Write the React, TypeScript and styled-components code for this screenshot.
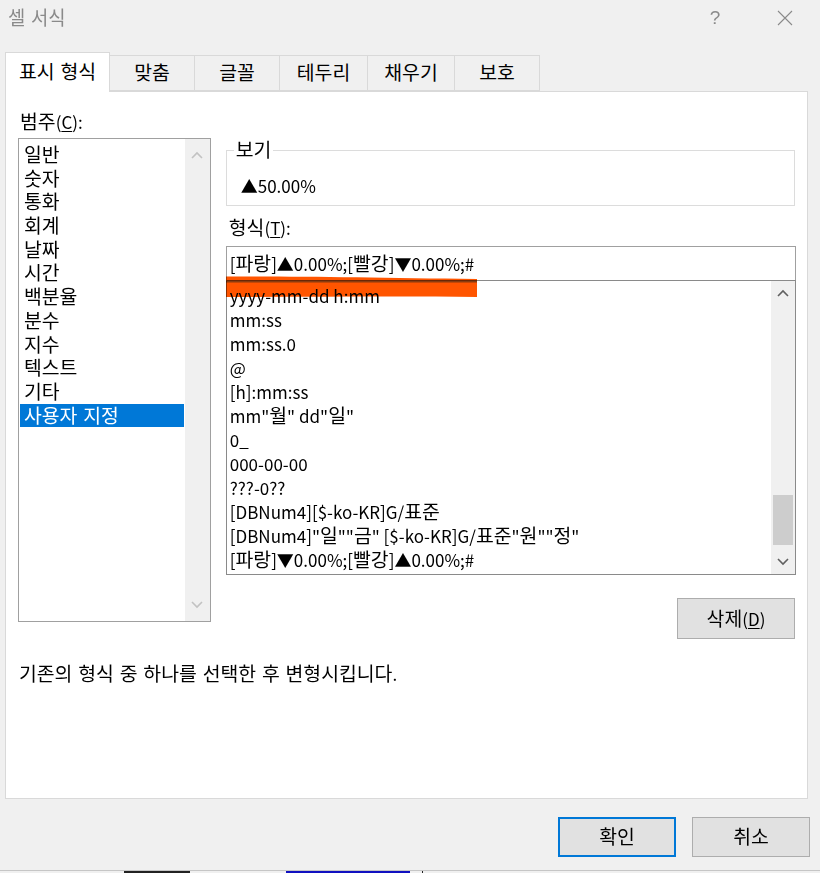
import React from 'react';
import styled, { createGlobalStyle } from 'styled-components';

const GlobalStyle = createGlobalStyle`
  html, body { margin: 0; padding: 0; background: #f0f0f0; }
  body { font-family: "Noto Sans CJK KR", "Noto Sans", sans-serif; color: #000; }
  * { box-sizing: border-box; }
`;

const Hangul = styled.span`
  display: inline-block;
  font-size: 1.14em;
  line-height: 1;
  word-spacing: 1.5px;
  white-space: pre;
`;

const HANGUL_RUN = /[\uAC00-\uD7A3\u3131-\u318E]+(?:\s+[\uAC00-\uD7A3\u3131-\u318E]+)*/g;

function K({ children }: { children: string }) {
  const parts: React.ReactNode[] = [];
  let last = 0;
  let m: RegExpExecArray | null;
  const re = new RegExp(HANGUL_RUN.source, 'g');
  let i = 0;
  while ((m = re.exec(children)) !== null) {
    if (m.index > last) parts.push(children.slice(last, m.index));
    parts.push(<Hangul key={i++}>{m[0]}</Hangul>);
    last = m.index + m[0].length;
  }
  if (last < children.length) parts.push(children.slice(last));
  return <>{parts}</>;
}

const Dialog = styled.div`
  width: 820px;
  height: 873px;
  display: flex;
  flex-direction: column;
  background: #f0f0f0;
  overflow: hidden;
`;

const TitleBar = styled.div`
  height: 36px;
  display: flex;
  align-items: center;
  padding-left: 8px;
`;

const Title = styled.div`
  flex: 1;
  font-size: 16.5px;
  color: #8a8a8a;
  line-height: 36px;
`;

const TitleButton = styled.div`
  width: 70px;
  height: 36px;
  display: flex;
  align-items: center;
  justify-content: center;
  color: #8a8a8a;
  font-family: "Liberation Sans", sans-serif;
  font-size: 19px;
`;

const TabStrip = styled.div`
  margin-top: 16px;
  height: 40px;
  padding-left: 5px;
  display: flex;
  align-items: flex-end;
  position: relative;
  z-index: 1;
`;

const Tab = styled.div<{ $active?: boolean; $w: number }>`
  width: ${(p) => p.$w}px;
  height: ${(p) => (p.$active ? 40 : 36)}px;
  margin-bottom: ${(p) => (p.$active ? 0 : 1)}px;
  margin-left: -1px;
  &:first-child { margin-left: 0; }
  border: 1px solid #d9d9d9;
  border-bottom: ${(p) => (p.$active ? 'none' : '1px solid #d9d9d9')};
  background: ${(p) => (p.$active ? '#fff' : '#f0f0f0')};
  display: flex;
  align-items: center;
  justify-content: center;
  padding-bottom: ${(p) => (p.$active ? 1 : 0)}px;
  font-size: 17px;
  line-height: 24px;
  color: #000;
`;

const Panel = styled.div`
  margin: -1px 12px 0 5px;
  height: 709px;
  background: #fff;
  border: 1px solid #d9d9d9;
  padding: 18px 11px 0 12px;
  display: flex;
  flex-direction: column;
`;

const Label = styled.div<{ $pl?: number; $mt?: number }>`
  font-size: 17px;
  line-height: 24px;
  height: 24px;
  margin-top: ${(p) => p.$mt ?? 0}px;
  padding-left: ${(p) => p.$pl ?? 2}px;
  u { text-underline-offset: 2px; }
`;

const Columns = styled.div`
  margin-top: 4px;
  display: flex;
  gap: 15px;
  align-items: flex-start;
`;

const CategoryBox = styled.div`
  width: 193px;
  height: 484px;
  border: 1px solid #a0a0a0;
  display: flex;
`;

const CategoryItems = styled.div`
  flex: 1;
  padding: 4px 1px 0 1px;
`;

const CategoryItem = styled.div<{ $selected?: boolean }>`
  height: 23.7px;
  line-height: 23.7px;
  font-size: 17px;
  padding-left: 4px;
  background: ${(p) => (p.$selected ? '#0078d7' : 'transparent')};
  color: ${(p) => (p.$selected ? '#fff' : '#000')};
  white-space: nowrap;
`;

const ScrollBar = styled.div<{ $w: number }>`
  width: ${(p) => p.$w}px;
  background: #f0f0f0;
  display: flex;
  flex-direction: column;
`;

const ArrowBox = styled.div<{ $h?: number }>`
  height: ${(p) => p.$h ?? 24}px;
  display: flex;
  align-items: center;
  justify-content: center;
`;

const Track = styled.div`
  flex: 1;
  display: flex;
  flex-direction: column;
  align-items: center;
`;

const Thumb = styled.div<{ $top: number; $h: number }>`
  margin-top: ${(p) => p.$top}px;
  height: ${(p) => p.$h}px;
  width: 20px;
  background: #cdcdcd;
`;

const RightColumn = styled.div`
  width: 571px;
  display: flex;
  flex-direction: column;
  position: relative;
`;

const GroupBox = styled.fieldset`
  margin: 0;
  width: 569px;
  min-width: 0;
  border: 1px solid #dcdcdc;
  padding: 12px 14px 7px 14px;
`;

const GroupLegend = styled.legend`
  font-size: 17px;
  line-height: 24px;
  height: 24px;
  padding: 0 2px;
  margin-left: -7px;
`;

const SampleText = styled.div`
  font-size: 17px;
  line-height: 24px;
`;

const FormatInput = styled.div`
  margin-top: 6px;
  height: 35px;
  border: 1px solid #a0a0a0;
  display: flex;
  align-items: center;
  padding-left: 3px;
  font-size: 17px;
  line-height: 24px;
  background: #fff;
  white-space: nowrap;
`;

const FormatList = styled.div`
  margin-top: -1px;
  height: 295px;
  border: 1px solid #8a8a8a;
  display: flex;
`;

const FormatItems = styled.div`
  flex: 1;
  padding: 3px 0 0 3px;
`;

const FormatItem = styled.div`
  height: 24px;
  line-height: 24px;
  font-size: 17px;
  white-space: nowrap;
`;

const Marker = styled.svg`
  position: absolute;
  left: 0;
  top: 138px;
  mix-blend-mode: multiply;
  pointer-events: none;
`;

const Button = styled.button<{ $default?: boolean }>`
  width: 118px;
  height: 40px;
  background: #e1e1e1;
  border: ${(p) => (p.$default ? '2px solid #0078d7' : '1px solid #adadad')};
  font-family: inherit;
  font-size: 17px;
  line-height: 24px;
  color: #000;
  padding: 0;
  display: flex;
  align-items: center;
  justify-content: center;
  u { text-underline-offset: 2px; }
`;

const DeleteButton = styled(Button)`
  align-self: flex-end;
  margin: 23px 1px 0 0;
  height: 41px;
`;

const Description = styled.div`
  margin-top: 23px;
  font-size: 17px;
  line-height: 24px;
  padding-left: 1px;
`;

const Footer = styled.div`
  margin-top: 18px;
  display: flex;
  justify-content: flex-end;
  gap: 16px;
  padding-right: 10px;
`;

const BottomStrip = styled.div`
  margin-top: 13px;
  height: 3px;
  border-top: 1px solid #c6c6c6;
  display: flex;
  align-items: flex-start;
`;

const Frag = styled.div<{ $ml: number; $w: number; $c: string }>`
  margin-left: ${(p) => p.$ml}px;
  width: ${(p) => p.$w}px;
  height: 2px;
  background: ${(p) => p.$c};
`;

const Chevron = ({ up, color }: { up?: boolean; color: string }) => (
  <svg width="12" height="8" viewBox="0 0 12 8">
    <path
      d={up ? 'M1 7 L6 2 L11 7' : 'M1 1 L6 6 L11 1'}
      fill="none"
      stroke={color}
      strokeWidth="1.6"
    />
  </svg>
);

const categories = ['일반', '숫자', '통화', '회계', '날짜', '시간', '백분율', '분수', '지수', '텍스트', '기타', '사용자 지정'];

const formats = [
  'yyyy-mm-dd h:mm',
  'mm:ss',
  'mm:ss.0',
  '@',
  '[h]:mm:ss',
  'mm"월" dd"일"',
  '0_',
  '000-00-00',
  '???-0??',
  '[DBNum4][$-ko-KR]G/표준',
  '[DBNum4]"일""금" [$-ko-KR]G/표준"원""정"',
  '[파랑]▼0.00%;[빨강]▲0.00%;#',
];

const tabs = [
  { label: '표시 형식', w: 105 },
  { label: '맞춤', w: 86 },
  { label: '글꼴', w: 86 },
  { label: '테두리', w: 89 },
  { label: '채우기', w: 88 },
  { label: '보호', w: 86 },
];

export default function App() {
  return (
    <>
      <GlobalStyle />
      <Dialog>
        <TitleBar>
          <Title>
            <K>셀 서식</K>
          </Title>
          <TitleButton>?</TitleButton>
          <TitleButton>
            <svg width="16" height="16" viewBox="0 0 16 16">
              <path d="M1 1 L15 15 M15 1 L1 15" stroke="#8a8a8a" strokeWidth="1.1" fill="none" />
            </svg>
          </TitleButton>
        </TitleBar>
        <TabStrip>
          {tabs.map((t, i) => (
            <Tab key={t.label} $w={t.w} $active={i === 0}>
              <K>{t.label}</K>
            </Tab>
          ))}
        </TabStrip>
        <Panel>
          <Label>
            <K>범주</K>(<u>C</u>):
          </Label>
          <Columns>
            <CategoryBox>
              <CategoryItems>
                {categories.map((c) => (
                  <CategoryItem key={c} $selected={c === '사용자 지정'}>
                    <K>{c}</K>
                  </CategoryItem>
                ))}
              </CategoryItems>
              <ScrollBar $w={25}>
                <ArrowBox $h={32}>
                  <Chevron up color="#c2c2c2" />
                </ArrowBox>
                <Track />
                <ArrowBox $h={32}>
                  <Chevron color="#c2c2c2" />
                </ArrowBox>
              </ScrollBar>
            </CategoryBox>
            <RightColumn>
              <GroupBox>
                <GroupLegend>
                  <K>보기</K>
                </GroupLegend>
                <SampleText>▲50.00%</SampleText>
              </GroupBox>
              <Label $pl={3} $mt={10}>
                <K>형식</K>(<u>T</u>):
              </Label>
              <FormatInput>
                <K>[파랑]▲0.00%;[빨강]▼0.00%;#</K>
              </FormatInput>
              <FormatList>
                <FormatItems>
                  {formats.map((f) => (
                    <FormatItem key={f}>
                      <K>{f}</K>
                    </FormatItem>
                  ))}
                </FormatItems>
                <ScrollBar $w={24}>
                  <ArrowBox>
                    <Chevron up color="#606060" />
                  </ArrowBox>
                  <Track>
                    <Thumb $top={190} $h={50} />
                  </Track>
                  <ArrowBox>
                    <Chevron color="#606060" />
                  </ArrowBox>
                </ScrollBar>
              </FormatList>
              <Marker width="256" height="22" viewBox="0 0 256 22">
                <path
                  d="M0 0.5 C70 0 150 1.5 251 3 L251 21 C170 20 80 21 0 21 Z"
                  fill="#ff5500"
                />
                <path d="M0 5.5 L251 5.5" stroke="#8a3c10" strokeWidth="2" />
              </Marker>
              <DeleteButton>
                <K>삭제</K>(<u>D</u>)
              </DeleteButton>
            </RightColumn>
          </Columns>
          <Description>
            <K>기존의 형식 중 하나를 선택한 후 변형시킵니다.</K>
          </Description>
        </Panel>
        <Footer>
          <Button $default>
            <K>확인</K>
          </Button>
          <Button>
            <K>취소</K>
          </Button>
        </Footer>
        <BottomStrip>
          <Frag $ml={124} $w={66} $c="#222" />
          <Frag $ml={96} $w={124} $c="#1010c0" />
          <Frag $ml={12} $w={1} $c="#222" />
        </BottomStrip>
      </Dialog>
    </>
  );
}
